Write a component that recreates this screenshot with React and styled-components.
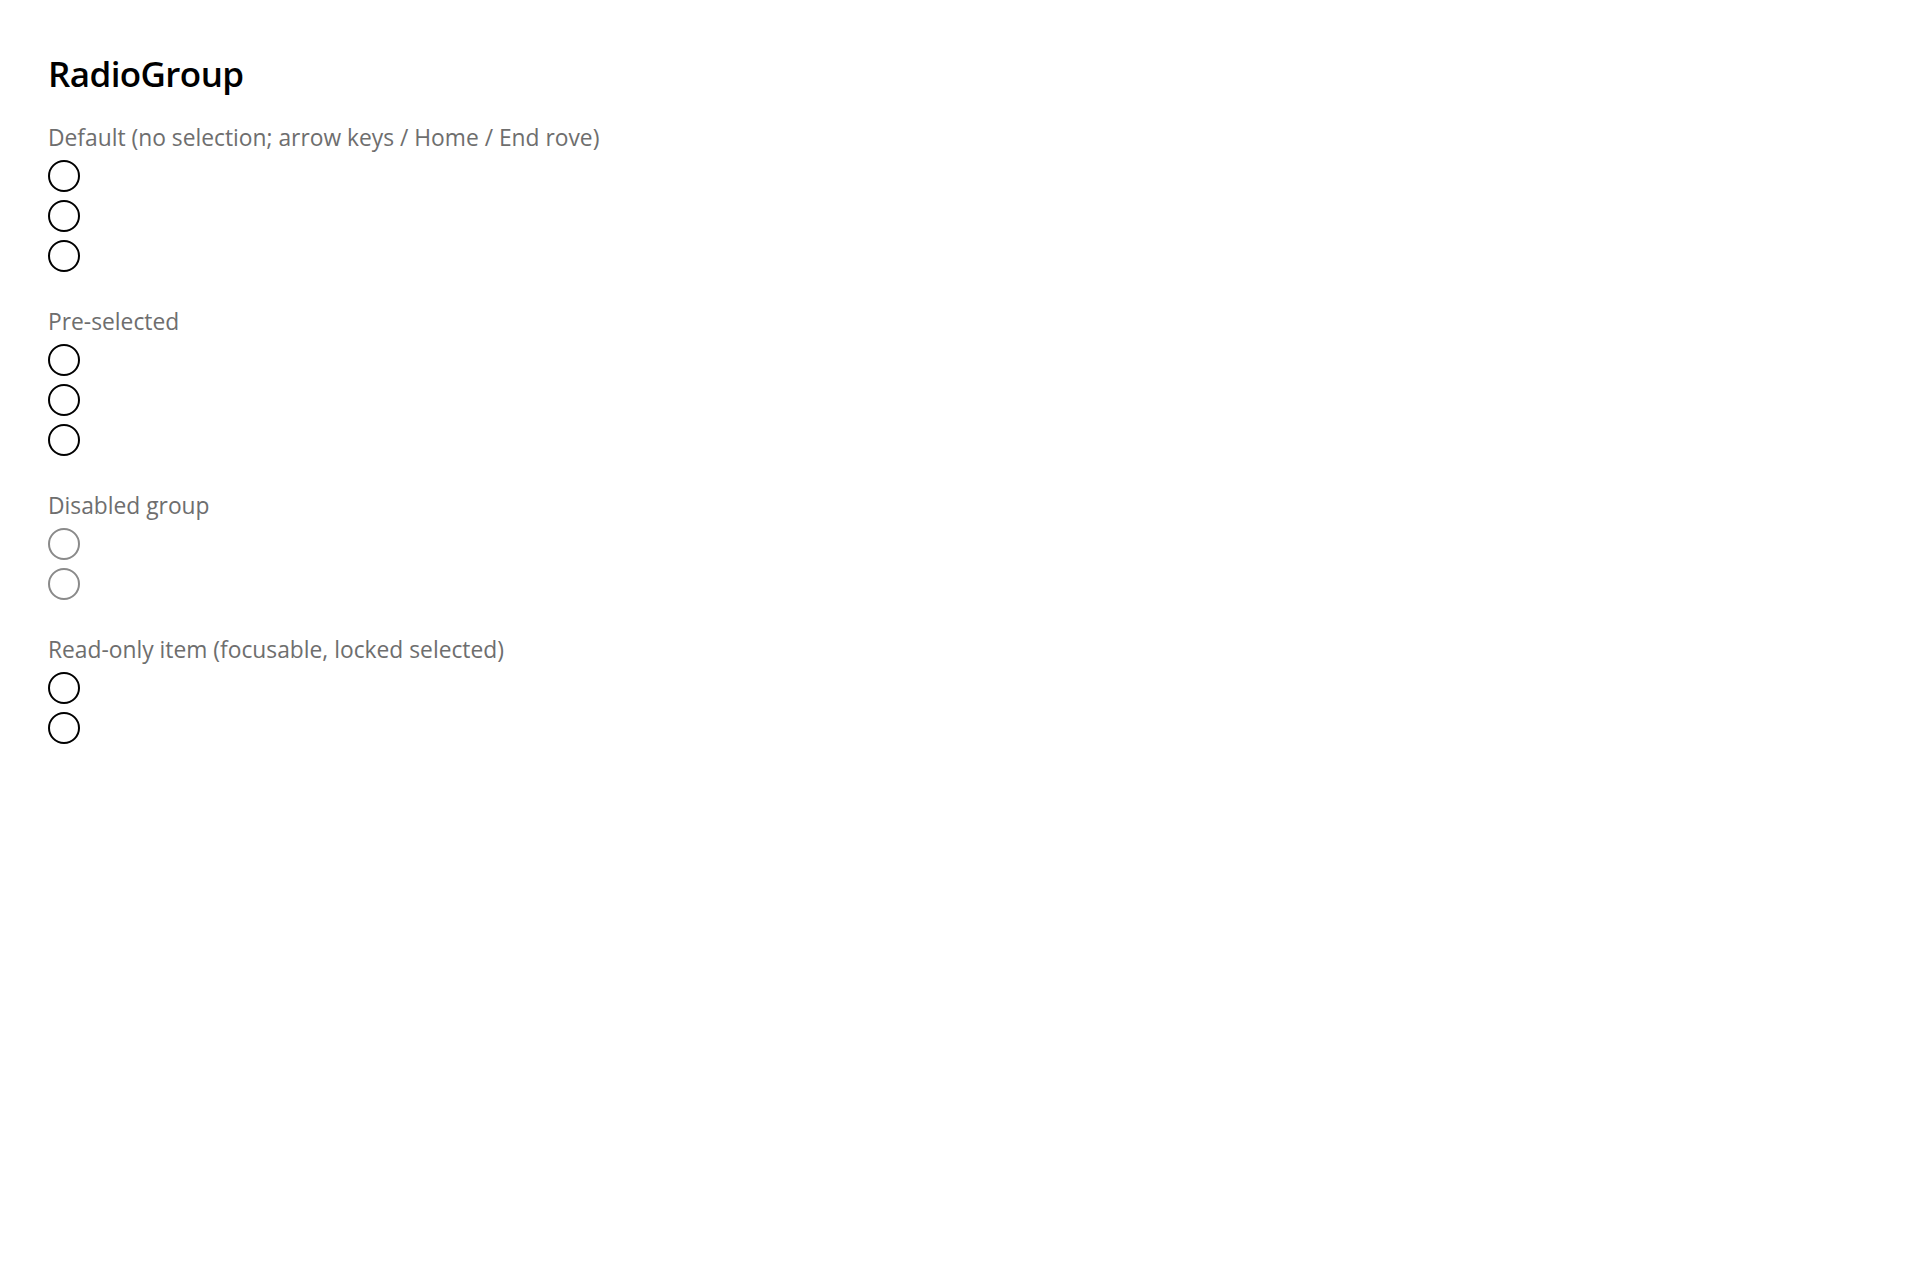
import React, {useState} from 'react'
import styled, {createGlobalStyle} from 'styled-components'

const GlobalStyle = createGlobalStyle`
    body{
        margin: 0;
        background: #fff;
        font-family: "Open Sans", "Noto Sans", sans-serif;
        color: #000;
    }
`

function RadioGroup({label, items, disabled, defaultValue, readOnly}){
    const [value, setValue] = useState(defaultValue)
    return(
        <Section>
            <Label>{label}</Label>
            <Group role="radiogroup" aria-label={label}>
                {items.map((item)=>(
                    <Radio
                        key={item}
                        type="button"
                        role="radio"
                        aria-checked={value === item}
                        aria-readonly={readOnly}
                        disabled={disabled}
                        $disabled={disabled}
                        onClick={()=>{ if(!readOnly) setValue(item) }}
                    />
                ))}
            </Group>
        </Section>
    )
}

export default function App(){
    return(
        <Page>
            <GlobalStyle />
            <Title>RadioGroup</Title>
            <RadioGroup
                label="Default (no selection; arrow keys / Home / End rove)"
                items={['a', 'b', 'c']}
            />
            <RadioGroup
                label="Pre-selected"
                items={['a', 'b', 'c']}
            />
            <RadioGroup
                label="Disabled group"
                items={['a', 'b']}
                disabled
            />
            <RadioGroup
                label="Read-only item (focusable, locked selected)"
                items={['a', 'b']}
                readOnly
            />
        </Page>
    )
}

const Page = styled.main`
    padding: 54px 48px;
    display: flex;
    flex-flow: column nowrap;
    align-items: flex-start;
`

const Title = styled.h1`
    margin: 0 0 30px;
    font-size: 35px;
    line-height: 40px;
    font-weight: 600;
    letter-spacing: -0.6px;
`

const Section = styled.section`
    display: flex;
    flex-flow: column nowrap;
    margin-bottom: 36px;
`

const Label = styled.div`
    font-size: 22.8px;
    line-height: 28px;
    color: #6e6e6e;
    margin-bottom: 8px;
    white-space: nowrap;
`

const Group = styled.div`
    display: flex;
    flex-flow: column nowrap;
    gap: 8px;
`

const Radio = styled.button`
    width: 32px;
    height: 32px;
    padding: 0;
    border-radius: 50%;
    border: 2px solid ${p => p.$disabled ? '#8a8a8a' : '#000'};
    background: #fff;
    cursor: ${p => p.$disabled ? 'not-allowed' : 'pointer'};
`
